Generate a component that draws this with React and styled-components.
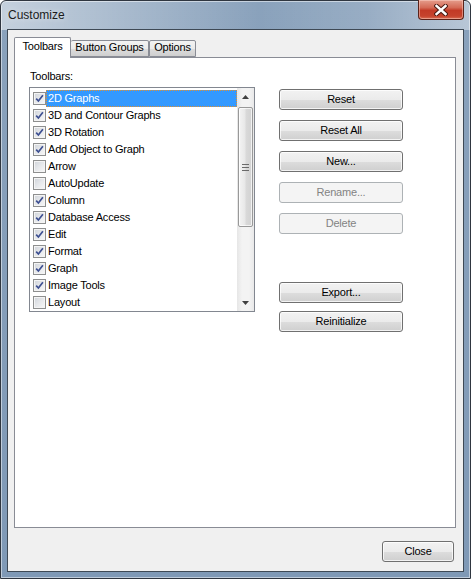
import React from 'react';
import styled, { createGlobalStyle } from 'styled-components';

const GlobalStyle = createGlobalStyle`
  html, body { margin: 0; padding: 0; background: #ffffff; }
  body { font-family: "Liberation Sans", Arial, sans-serif; font-size: 11px; letter-spacing: -0.2px; color: #000; }
  * { box-sizing: border-box; }
`;

const Window = styled.div`
  width: 471px;
  height: 579px;
  border: 1px solid #2f3640;
  border-radius: 6px 6px 0 0;
  padding: 0 6px 6px 6px;
  display: flex;
  flex-direction: column;
  background:
    linear-gradient(to right, rgba(255,255,255,0.5) 0%, rgba(255,255,255,0.3) 22%, rgba(255,255,255,0) 55%, rgba(255,255,255,0.12) 78%, rgba(255,255,255,0.4) 100%) 0 0 / 100% 29px no-repeat,
    linear-gradient(to bottom, #8aa2bc 0%, #7f99b6 100%);
  box-shadow: inset 0 0 0 1px rgba(255,255,255,0.5);
`;

const TitleBar = styled.div`
  height: 28px;
  display: flex;
  align-items: flex-start;
`;

const Title = styled.div`
  margin: 7px 0 0 1px;
  font-size: 12px;
  line-height: 14px;
  letter-spacing: 0;
  color: #1b1b1b;
  text-shadow: 0 0 6px rgba(255,255,255,0.7);
`;

const CloseX = styled.div`
  margin-left: auto;
  margin-top: -1px;
  width: 46px;
  height: 20px;
  border: 1px solid #5b2219;
  border-top: none;
  border-radius: 0 0 4px 4px;
  background: linear-gradient(to bottom, #e59d8c 0%, #d46a56 40%, #c23a26 55%, #c6432d 85%, #d86f55 100%);
  box-shadow: inset 0 0 0 1px rgba(255,220,210,0.45);
  display: flex;
  align-items: center;
  justify-content: center;
`;

const Client = styled.div`
  flex: 1;
  display: flex;
  flex-direction: column;
  background: #f0f0f0;
  border: 1px solid #3e4955;
`;

const TabStrip = styled.div`
  display: flex;
  align-items: flex-end;
  height: 21px;
  margin: 7px 0 -1px 6px;
  position: relative;
  z-index: 1;
`;

const Tab = styled.div`
  height: ${p => (p.$active ? '21px' : '17px')};
  margin-bottom: ${p => (p.$active ? '0' : '1px')};
  width: ${p => p.$w}px;
  border: 1px solid #898c95;
  border-bottom: ${p => (p.$active ? 'none' : '1px solid #898c95')};
  border-left: ${p => (p.$noLeft ? 'none' : '1px solid #898c95')};
  border-radius: 2px 2px 0 0;
  background: ${p => (p.$active ? '#ffffff' : 'linear-gradient(to bottom, #f3f3f3 0%, #ebebeb 50%, #dddddd 51%, #cfcfcf 100%)')};
  padding-top: ${p => (p.$active ? '2px' : '0')};
  line-height: 13px;
  text-align: center;
  color: #000;
`;

const Panel = styled.div`
  height: 471px;
  margin: 0 7px 0 6px;
  border: 1px solid #898c95;
  background: #ffffff;
  display: flex;
  align-items: flex-start;
  padding: 12px 0 0 14px;
`;

const LeftCol = styled.div`
  display: flex;
  flex-direction: column;
`;

const FieldLabel = styled.div`
  line-height: 13px;
  margin: 0 0 4px 1px;
`;

const ListBox = styled.div`
  width: 226px;
  height: 225px;
  border: 1px solid #828790;
  background: #fff;
  display: flex;
`;

const Items = styled.div`
  flex: 1;
  padding-top: 2px;
  overflow: hidden;
`;

const Row = styled.div`
  height: 17px;
  display: flex;
  align-items: center;
  padding-left: 3px;
`;

const CheckBox = styled.span`
  width: 13px;
  height: 13px;
  flex: none;
  border: 1px solid #8e8f8f;
  background: linear-gradient(135deg, #cfd3d9 0%, #e6e8eb 50%, #f8f8f8 100%);
  box-shadow: inset 0 0 0 1px #f4f4f4;
  display: flex;
  align-items: center;
  justify-content: center;
`;

const ItemText = styled.span`
  flex: 1;
  height: 17px;
  line-height: 15px;
  padding: 0 1px;
  white-space: nowrap;
  border: 1px ${p => (p.$selected ? 'dotted #e3902e' : 'solid transparent')};
  background: ${p => (p.$selected ? '#3399ff' : 'transparent')};
  color: ${p => (p.$selected ? '#ffffff' : '#000000')};
`;

const ScrollBar = styled.div`
  width: 17px;
  flex: none;
  display: flex;
  flex-direction: column;
  background: linear-gradient(to right, #e6e6e6 0%, #f3f3f3 30%, #f3f3f3 70%, #e9e9e9 100%);
`;

const ArrowBtn = styled.div`
  height: 17px;
  display: flex;
  align-items: center;
  justify-content: center;
`;

const Thumb = styled.div`
  margin: 2px 1px 0 1px;
  height: 120px;
  border: 1px solid #999999;
  border-radius: 2px;
  background: linear-gradient(to right, #f4f4f4 0%, #e8e8e8 45%, #d9d9d9 55%, #d2d2d2 100%);
  box-shadow: inset 0 0 0 1px rgba(255,255,255,0.7);
  display: flex;
  align-items: center;
  justify-content: center;
`;

const Track = styled.div`
  flex: 1;
`;

const RightCol = styled.div`
  margin-left: 24px;
  padding-top: 19px;
  display: flex;
  flex-direction: column;
`;

const ButtonGroup = styled.div`
  display: flex;
  flex-direction: column;
  gap: ${p => p.$gap}px;
  margin-top: ${p => p.$mt || 0}px;
`;

const Button = styled.div`
  width: ${p => p.$w || 124}px;
  height: 21px;
  border: 1px solid ${p => (p.$disabled ? '#adb2b5' : '#707070')};
  border-radius: 3px;
  background: ${p => (p.$disabled ? '#f4f4f4' : 'linear-gradient(to bottom, #f2f2f2 0%, #ebebeb 50%, #dddddd 51%, #cfcfcf 100%)')};
  box-shadow: ${p => (p.$disabled ? 'none' : 'inset 0 0 0 1px rgba(255,255,255,0.75)')};
  color: ${p => (p.$disabled ? '#838383' : '#000000')};
  display: flex;
  align-items: center;
  justify-content: center;
  line-height: 13px;
`;

const Footer = styled.div`
  flex: 1;
  display: flex;
  justify-content: flex-end;
  align-items: flex-start;
  padding: 13px 9px 0 0;
`;

const items = [
  ['2D Graphs', true],
  ['3D and Contour Graphs', true],
  ['3D Rotation', true],
  ['Add Object to Graph', true],
  ['Arrow', false],
  ['AutoUpdate', false],
  ['Column', true],
  ['Database Access', true],
  ['Edit', true],
  ['Format', true],
  ['Graph', true],
  ['Image Tools', true],
  ['Layout', false],
];

const Check = () => (
  <svg width="9" height="9" viewBox="0 0 9 9">
    <path d="M1.2 4.6 L3.4 7 L7.9 1.3" fill="none" stroke="#3d4f91" strokeWidth="1.7" strokeLinejoin="miter" />
  </svg>
);

const UpArrow = () => (
  <svg width="7" height="4" viewBox="0 0 7 4"><polygon points="3.5,0 7,4 0,4" fill="#404040" /></svg>
);
const DownArrow = () => (
  <svg width="7" height="4" viewBox="0 0 7 4"><polygon points="0,0 7,0 3.5,4" fill="#404040" /></svg>
);
const Grip = () => (
  <svg width="7" height="7" viewBox="0 0 7 7">
    <rect x="0" y="0" width="7" height="1" fill="#6a6a6a" />
    <rect x="0" y="3" width="7" height="1" fill="#6a6a6a" />
    <rect x="0" y="6" width="7" height="1" fill="#6a6a6a" />
  </svg>
);
const CloseGlyph = () => (
  <svg width="14" height="12" viewBox="0 0 14 12">
    <path d="M2.5 2 L11.5 10 M11.5 2 L2.5 10" stroke="#4a1a12" strokeWidth="4.4" strokeLinecap="square" />
    <path d="M2.5 2 L11.5 10 M11.5 2 L2.5 10" stroke="#ffffff" strokeWidth="2.4" strokeLinecap="square" />
  </svg>
);

export default function App() {
  return (
    <>
      <GlobalStyle />
      <Window>
        <TitleBar>
          <Title>Customize</Title>
          <CloseX><CloseGlyph /></CloseX>
        </TitleBar>
        <Client>
          <TabStrip>
            <Tab $active $w={57}>Toolbars</Tab>
            <Tab $w={78} $noLeft>Button Groups</Tab>
            <Tab $w={47}>Options</Tab>
          </TabStrip>
          <Panel>
            <LeftCol>
              <FieldLabel>Toolbars:</FieldLabel>
              <ListBox>
                <Items>
                  {items.map(([name, checked], i) => (
                    <Row key={name}>
                      <CheckBox>{checked && <Check />}</CheckBox>
                      <ItemText $selected={i === 0}>{name}</ItemText>
                    </Row>
                  ))}
                </Items>
                <ScrollBar>
                  <ArrowBtn><UpArrow /></ArrowBtn>
                  <Thumb><Grip /></Thumb>
                  <Track />
                  <ArrowBtn><DownArrow /></ArrowBtn>
                </ScrollBar>
              </ListBox>
            </LeftCol>
            <RightCol>
              <ButtonGroup $gap={10}>
                <Button>Reset</Button>
                <Button>Reset All</Button>
                <Button>New...</Button>
                <Button $disabled>Rename...</Button>
                <Button $disabled>Delete</Button>
              </ButtonGroup>
              <ButtonGroup $gap={8} $mt={48}>
                <Button>Export...</Button>
                <Button>Reinitialize</Button>
              </ButtonGroup>
            </RightCol>
          </Panel>
          <Footer>
            <Button $w={72}>Close</Button>
          </Footer>
        </Client>
      </Window>
    </>
  );
}
